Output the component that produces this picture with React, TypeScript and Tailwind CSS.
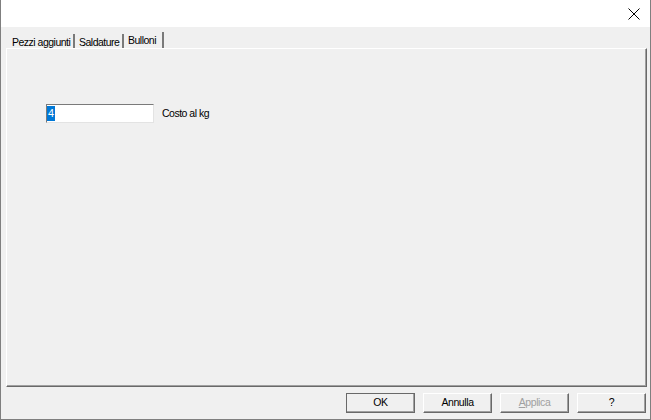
import React from "react";

const font = { fontFamily: '"Liberation Sans", Arial, sans-serif' };

function Tab({ label, width, selected }: { label: string; width: string; selected?: boolean }) {
  return (
    <div
      className={`${width} ${
        selected ? "h-[16px]" : "h-[14px]"
      } flex items-start whitespace-nowrap border-r-2 border-r-[#7a7a7a] pl-[4px] pt-[2px] text-[10.5px] leading-[13px] tracking-[-0.5px] text-black`}
    >
      {label}
    </div>
  );
}

function DlgButton({
  children,
  isDefault,
  disabled,
}: {
  children: React.ReactNode;
  isDefault?: boolean;
  disabled?: boolean;
}) {
  return (
    <div
      className={`${
        isDefault ? "outline outline-1 -outline-offset-1 outline-[#696969]" : ""
      } flex h-[20px] w-[69px] items-center justify-center whitespace-nowrap border-t border-l border-white border-r border-b border-r-[#696969] border-b-[#696969] bg-[#f0f0f0] shadow-[inset_-1px_-1px_0_#a0a0a0] text-[10.5px] tracking-[-0.4px] ${
        disabled ? "text-[#a0a0a0]" : "text-black"
      }`}
    >
      {children}
    </div>
  );
}

export default function App() {
  return (
    <div
      style={font}
      className="flex h-[420px] w-[651px] flex-col border-x border-b border-[#7f7f7f] bg-[#f0f0f0]"
    >
      {/* title bar */}
      <div className="flex h-[27px] items-center justify-end bg-white pr-[9px]">
        <svg width="12" height="12" viewBox="0 0 12 12" className="mr-[1px]">
          <path d="M0.5 0.5 L11.5 11.5 M11.5 0.5 L0.5 11.5" stroke="#000" strokeWidth="1" />
        </svg>
      </div>

      {/* tabs */}
      <div className="ml-[7px] mt-[5px] flex h-[16px] items-end">
        <Tab label="Pezzi aggiunti" width="w-[67px]" />
        <Tab label="Saldature" width="w-[49px]" />
        <Tab label="Bulloni" width="w-[40px]" selected />
      </div>

      {/* panel */}
      <div className="ml-[5px] mr-[3px] h-[339px] border-t border-l border-white border-r border-b border-r-[#696969] border-b-[#696969] shadow-[inset_-1px_-1px_0_#a0a0a0]">
        <div className="flex items-center pl-[39px] pt-[55px]">
          <div className="flex h-[19px] w-[108px] items-center border-t border-l border-[#7a7a7a] border-r border-b border-r-[#e3e3e3] border-b-[#e3e3e3] bg-white">
            <span className="flex h-[15px] items-center bg-[#0078d7] px-[1px] text-[11px] leading-[13px] text-white">
              4
            </span>
          </div>
          <span className="ml-[8px] whitespace-nowrap text-[10.5px] tracking-[-0.5px] text-black">
            Costo al kg
          </span>
        </div>
      </div>

      {/* buttons */}
      <div className="mt-[6px] flex justify-end gap-[8px] pr-[4px]">
        <DlgButton isDefault>OK</DlgButton>
        <DlgButton>Annulla</DlgButton>
        <DlgButton disabled>
          <span>
            <span className="underline">A</span>pplica
          </span>
        </DlgButton>
        <DlgButton>?</DlgButton>
      </div>
    </div>
  );
}
